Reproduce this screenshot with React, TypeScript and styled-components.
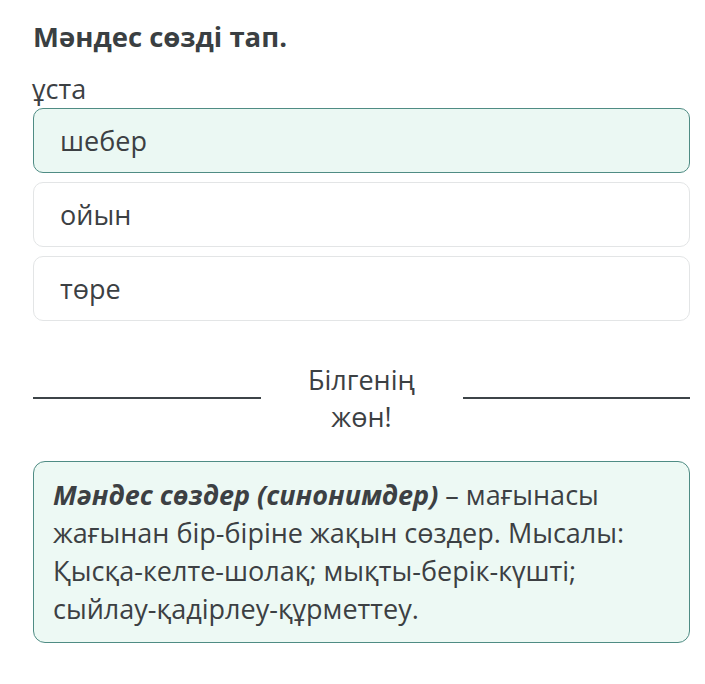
import styled, { createGlobalStyle } from "styled-components";

const GlobalStyle = createGlobalStyle`
  body {
    margin: 0;
    background: #ffffff;
    font-family: "Open Sans", "Noto Sans", sans-serif;
    color: #3c4043;
  }
`;

const Page = styled.div`
  padding: 17px 15px 0 33px;
  display: flex;
  flex-direction: column;
`;

const Title = styled.h2`
  margin: 0;
  font-size: 27.5px;
  font-weight: 700;
  line-height: 40px;
  color: #3a3f42;
`;

const Prompt = styled.div`
  margin-top: 13px;
  font-size: 27px;
  line-height: 38px;
  margin-left: -1px;
`;

const Options = styled.div`
  display: flex;
  flex-direction: column;
  gap: 9px;
`;

const Option = styled.div<{ $selected?: boolean }>`
  box-sizing: border-box;
  height: 65px;
  display: flex;
  align-items: center;
  padding: 0 26px;
  font-size: 27px;
  border-radius: 10px;
  border: 1px solid ${(p) => (p.$selected ? "#4f8c84" : "#e3e5e6")};
  background: ${(p) => (p.$selected ? "#ebf8f3" : "#ffffff")};
`;

const Divider = styled.div`
  margin-top: 40px;
  display: flex;
  align-items: center;
`;

const Line = styled.div`
  flex: 1;
  height: 2px;
  background: #3d4448;
`;

const DividerText = styled.div`
  width: 202px;
  box-sizing: border-box;
  padding: 0 40px;
  text-align: center;
  font-size: 27px;
  line-height: 37px;
`;

const InfoBox = styled.div`
  margin-top: 26px;
  box-sizing: border-box;
  padding: 14px 18px 14px 19px;
  border: 1px solid #4f8c84;
  border-radius: 12px;
  background: #edf9f4;
  font-size: 27px;
  line-height: 38px;
`;

const Term = styled.span`
  font-weight: 700;
  font-style: italic;
`;

const NoWrap = styled.span`
  white-space: nowrap;
`;

export default function App() {
  return (
    <>
      <GlobalStyle />
      <Page>
        <Title>Мәндес сөзді тап.</Title>
        <Prompt>ұста</Prompt>
        <Options>
          <Option $selected>шебер</Option>
          <Option>ойын</Option>
          <Option>төре</Option>
        </Options>
        <Divider>
          <Line />
          <DividerText>Білгенің жөн!</DividerText>
          <Line />
        </Divider>
        <InfoBox>
          <Term>Мәндес сөздер (синонимдер)</Term> – мағынасы жағынан бір-біріне
          жақын сөздер. Мысалы: Қысқа-келте-шолақ; мықты-берік-күшті;{" "}
          <NoWrap>сыйлау-қадірлеу-құрметтеу.</NoWrap>
        </InfoBox>
      </Page>
    </>
  );
}
